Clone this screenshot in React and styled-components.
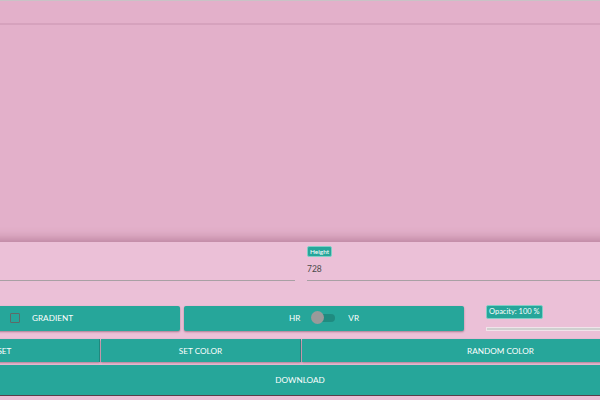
import React from 'react'
import styled, { createGlobalStyle } from 'styled-components'

const Global = createGlobalStyle`
  html, body {
    margin: 0;
    padding: 0;
    overflow: hidden;
    background: #ebc0d7;
    font-family: Lato, "Open Sans", sans-serif;
  }
`;

const Page = styled.div`
  width: 800px;
  margin-left: -100px;
  border-top: 1px solid #c9c3c6;
`;

const Preview = styled.div`
  height: 241px;
  background: #e3b0ca;
`;

const PreviewHead = styled.div`
  height: 22px;
  border-bottom: 2px solid #d6a2bd;
`;

const Controls = styled.div`
  position: relative;
  display: flex;
  flex-direction: column;
  padding-top: 4px;
  background: #ebc0d7;
  box-shadow: 0 -3px 10px rgba(130, 70, 100, 0.45);
`;

const InputRow = styled.div`
  display: grid;
  grid-template-columns: 395px 1fr;
  gap: 12px;
  height: 40px;
`;

const Field = styled.div`
  display: flex;
  flex-direction: column;
  border-bottom: 1px solid #a8a0a4;
  height: 34px;
`;

const Badge = styled.span`
  align-self: flex-start;
  background: #26a69a;
  color: #fff;
  font-size: ${p => p.$size || 6.5}px;
  line-height: ${p => (p.$size ? p.$size + 4 : 9)}px;
  padding: 0 2px;
  border-radius: 2px;
  border: 1px solid #7fcfc6;
`;

const Value = styled.span`
  font-size: 8.5px;
  color: #4a4a4a;
  margin-top: 7px;
`;

const OptionRow = styled.div`
  display: grid;
  grid-template-columns: 280px 280px 1fr;
  gap: 4px;
  margin-top: 20px;
  height: 22px;
`;

const Button = styled.div`
  background: #26a69a;
  color: #fff;
  font-size: 8.2px;
  display: flex;
  align-items: center;
  justify-content: ${p => (p.$start ? 'flex-start' : 'center')};
  gap: ${p => p.$gap || 0}px;
  padding-left: ${p => p.$pl || 0}px;
  border-radius: 2px;
  box-shadow: 0 1px 2px rgba(90, 40, 60, 0.45);
  box-sizing: border-box;
`;

const Check = styled.span`
  width: 8px;
  height: 8px;
  border: 1.5px solid #5e6a68;
  border-radius: 1px;
`;

const Switch = styled.span`
  position: relative;
  width: 22px;
  height: 8px;
  background: #1f8b80;
  border-radius: 4px;
`;

const Knob = styled.span`
  position: absolute;
  left: -2px;
  top: -3px;
  width: 13px;
  height: 13px;
  border-radius: 50%;
  background: #9a9a9a;
`;

const OpacityBox = styled.div`
  padding-left: 18px;
  display: flex;
  flex-direction: column;
  gap: 8px;
  margin-top: -1px;
`;

const Track = styled.div`
  height: 2px;
  background: #cfcfcf;
  border: 1px solid #f0e4ea;
  border-right: none;
`;

const ActionRow = styled.div`
  display: grid;
  grid-template-columns: 200px 200px 1fr;
  gap: 1px;
  margin-top: 11px;
  height: 23px;
`;

const Flat = styled(Button)`
  border-radius: 0;
  border-right: 1px solid #1e8c81;
`;

const Download = styled(Button)`
  margin-top: 3px;
  height: 31px;
  border-bottom: 1px solid #5b3d4b;
`;

export default function App() {
  return (
    <>
      <Global />
      <Page>
        <Preview>
          <PreviewHead />
        </Preview>
        <Controls>
          <InputRow>
            <Field />
            <Field>
              <Badge>Height</Badge>
              <Value>728</Value>
            </Field>
          </InputRow>
          <OptionRow>
            <Button $start $pl={110} $gap={12}>
              <Check />
              GRADIENT
            </Button>
            <Button $gap={13}>
              <span>HR</span>
              <Switch>
                <Knob />
              </Switch>
              <span>VR</span>
            </Button>
            <OpacityBox>
              <Badge $size={7.5}>Opacity: 100 %</Badge>
              <Track />
            </OpacityBox>
          </OptionRow>
          <ActionRow>
            <Flat>RESET</Flat>
            <Flat>SET COLOR</Flat>
            <Flat>RANDOM COLOR</Flat>
          </ActionRow>
          <Download>DOWNLOAD</Download>
        </Controls>
      </Page>
    </>
  )
}
